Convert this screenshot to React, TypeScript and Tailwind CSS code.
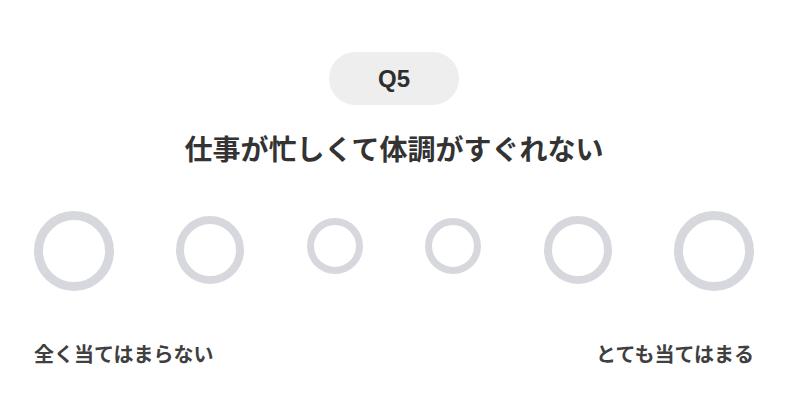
export default function App() {
  const sizes = [
    { d: "w-[80px] h-[80px] border-[9px] mt-0" },
    { d: "w-[68px] h-[68px] border-[8px] mt-[5px]" },
    { d: "w-[56px] h-[56px] border-[7px] mt-[7px]" },
    { d: "w-[56px] h-[56px] border-[7px] mt-[7px]" },
    { d: "w-[68px] h-[68px] border-[8px] mt-[5px]" },
    { d: "w-[80px] h-[80px] border-[9px] mt-0" },
  ];

  return (
    <main
      className="min-h-screen bg-white flex flex-col items-center px-[34px]"
      style={{ fontFamily: '"Noto Sans CJK JP", "Noto Sans", sans-serif' }}
    >
      {/* Question badge */}
      <div className="mt-[52px] w-[130px] h-[53px] rounded-full bg-[#eeeeee] flex items-center justify-center">
        <span
          className="text-[24px] leading-none font-bold text-[#2e2e2e]"
          style={{ fontFamily: '"Liberation Sans", Arial, sans-serif' }}
        >
          Q5
        </span>
      </div>

      <h1 className="mt-[23px] text-[28px] leading-[40px] font-bold text-[#333333]">
        仕事が忙しくて体調がすぐれない
      </h1>

      {/* Answer scale */}
      <div className="mt-[43px] w-full flex items-start justify-between">
        {sizes.map((s, i) => (
          <button
            key={i}
            className={`rounded-full border-[#d6d8dd] bg-white ${s.d}`}
          />
        ))}
      </div>

      <div className="mt-[49px] w-full flex justify-between text-[20px] leading-[28px] font-bold text-[#404040]">
        <span>全く当てはまらない</span>
        <span>とても当てはまる</span>
      </div>
    </main>
  );
}
